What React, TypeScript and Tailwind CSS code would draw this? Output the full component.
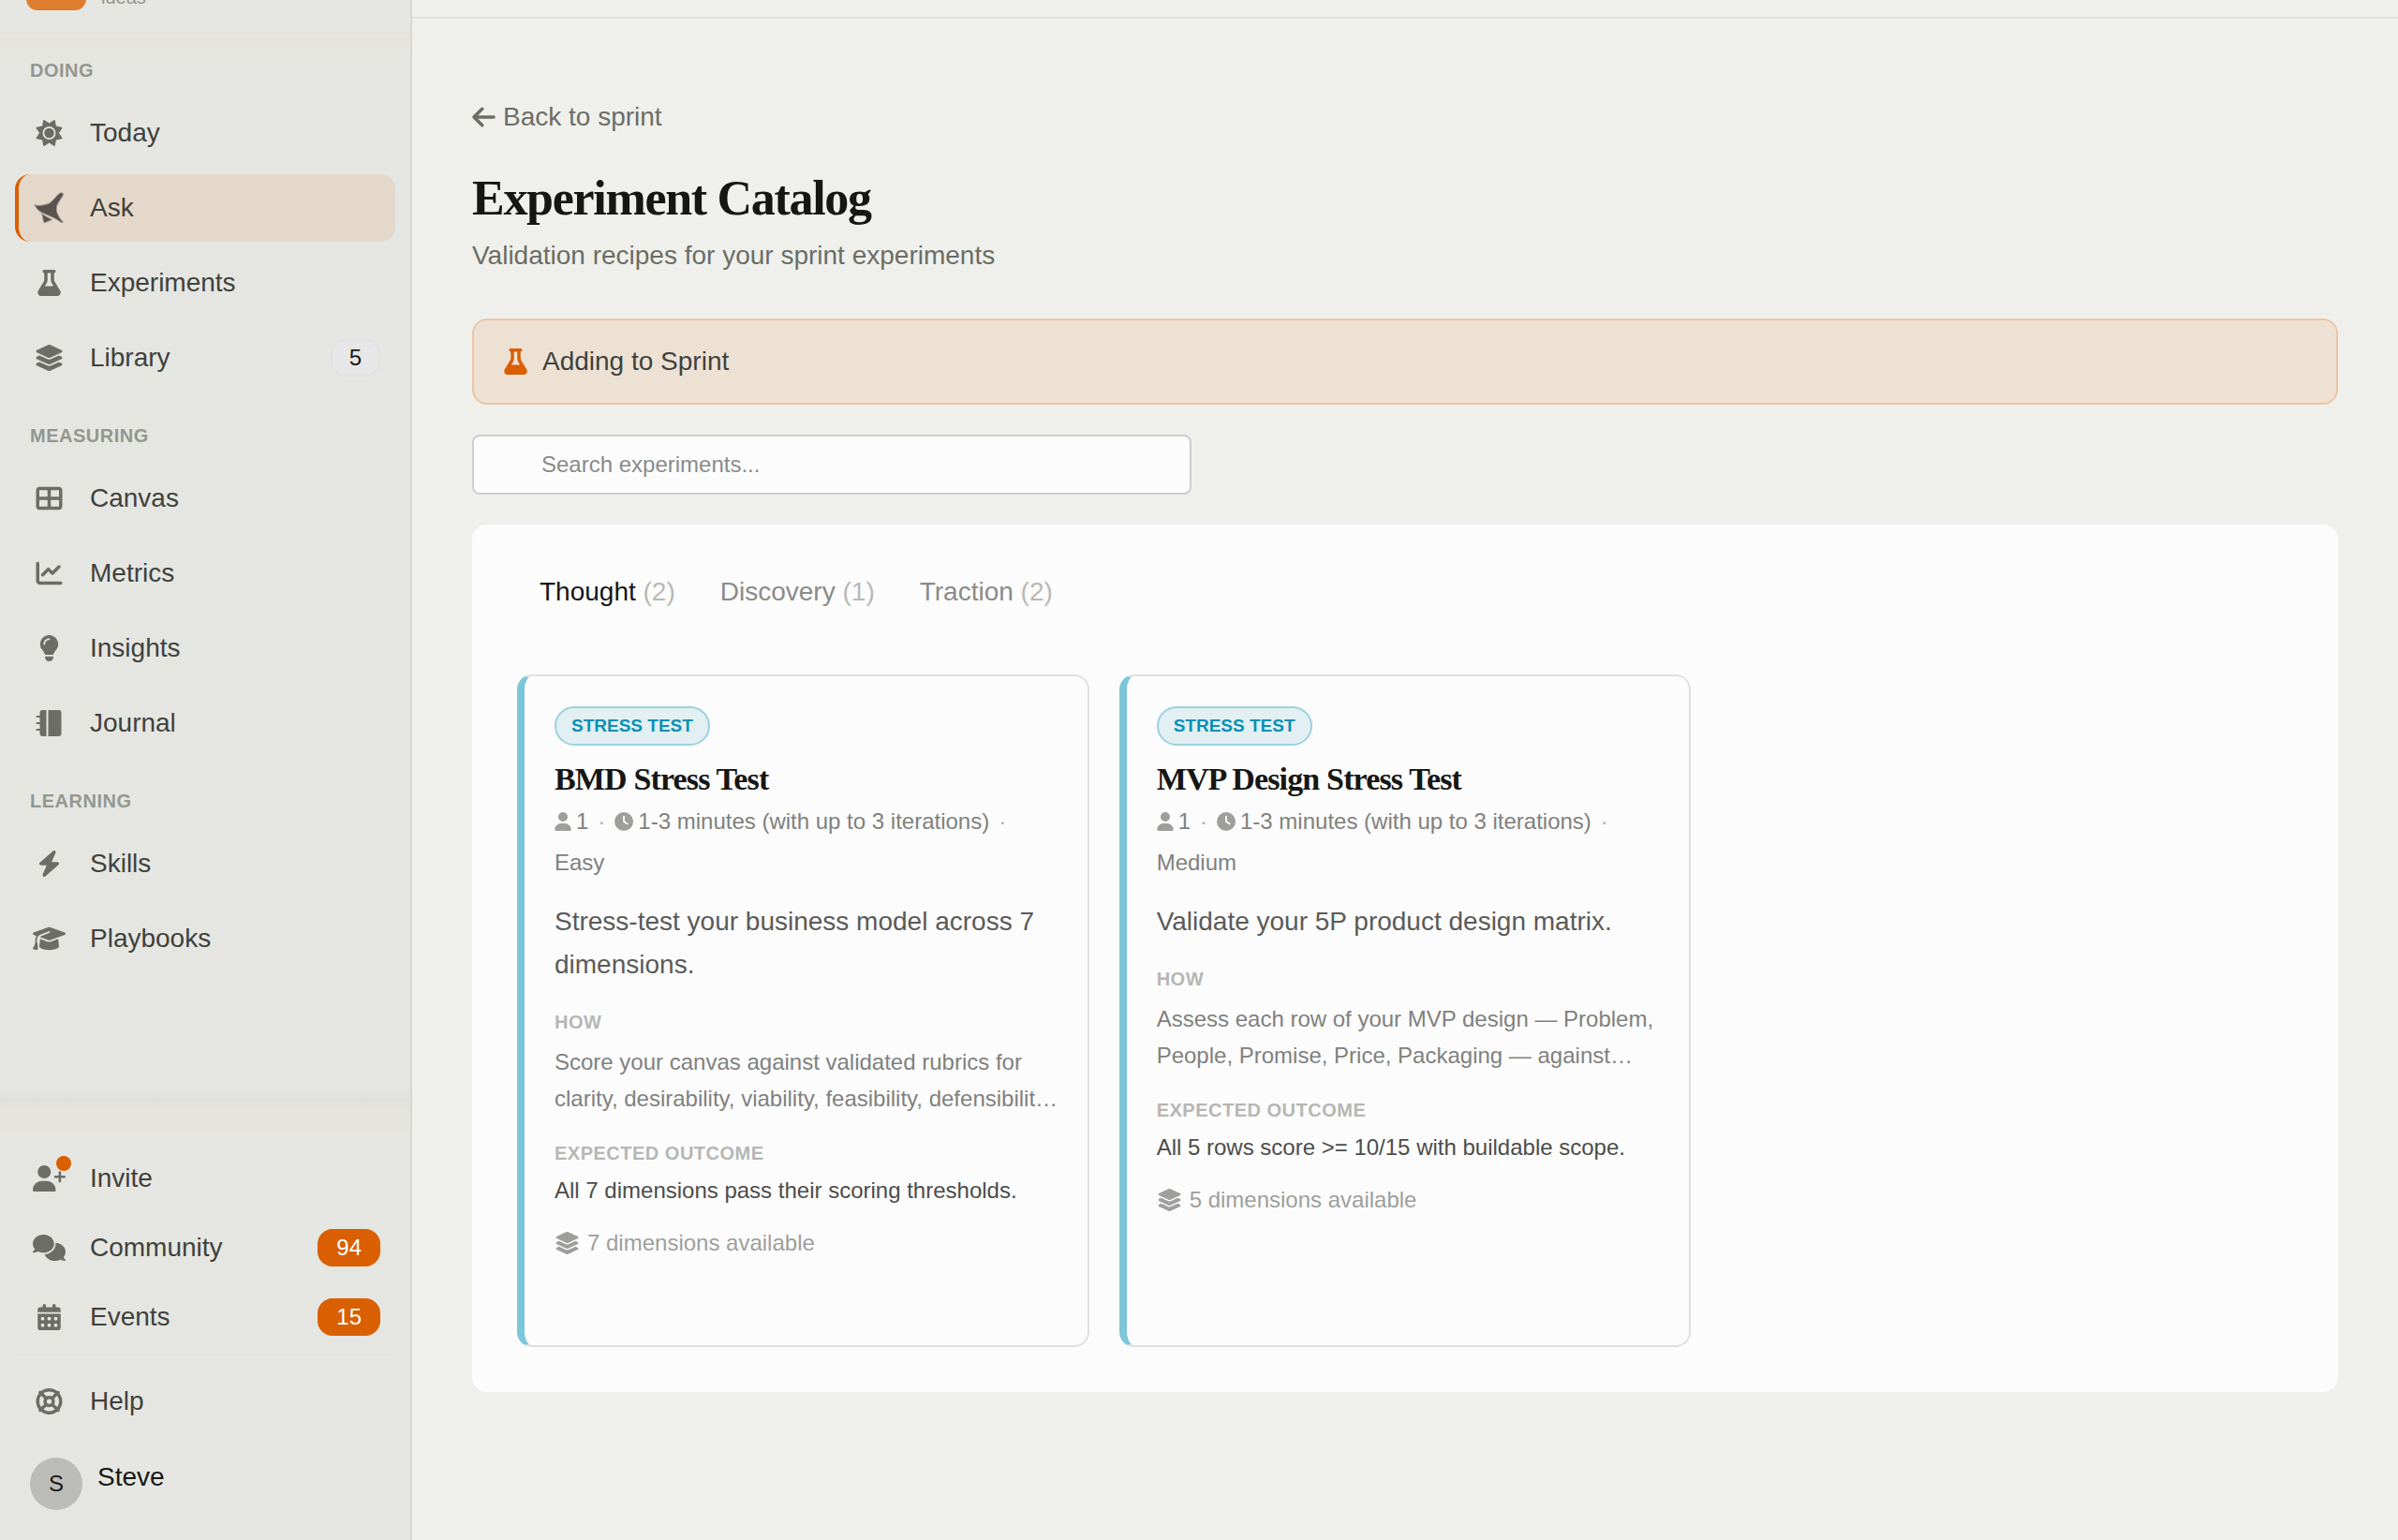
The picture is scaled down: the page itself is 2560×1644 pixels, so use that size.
import React from "react";
import {
  FaArrowLeft,
  FaBolt,
  FaCalendarDays,
  FaChartLine,
  FaClock,
  FaComments,
  FaFlask,
  FaGraduationCap,
  FaLayerGroup,
  FaLifeRing,
  FaLightbulb,
  FaSun,
  FaTableCellsLarge,
  FaUser,
  FaUserPlus,
} from "react-icons/fa6";

type Icon = React.ComponentType<{ className?: string }>;

function AskIcon({ className }: { className?: string }) {
  return (
    <svg viewBox="0 0 104 104" className={className} aria-hidden="true">
      <g fill="#58534f" stroke="#a8a098" strokeWidth="3" strokeLinejoin="round">
        <path d="M3 41C20 47 38 42 52 37C64 29 74 14 84 5Q91 0 97 4Q100 8 95 15C87 27 78 38 76 52C75 68 86 86 98 99Q94 102 86 96C72 84 40 74 22 64C13 57 8 49 3 41Z" />
        <path d="M27 70C38 78 50 84 62 90C52 94 44 98 36 101C30 92 33 80 27 70Z" />
      </g>
    </svg>
  );
}

function JournalIcon({ className }: { className?: string }) {
  return (
    <svg viewBox="0 0 28 28" className={className} fill="currentColor" aria-hidden="true">
      <path d="M7 0H11V28H7A3 3 0 0 1 4 25V22H1A1 1 0 0 1 1 20H4V15H1A1 1 0 0 1 1 13H4V8H1A1 1 0 0 1 1 6H4V3A3 3 0 0 1 7 0Z" />
      <path d="M13 0H24A3 3 0 0 1 27 3V25A3 3 0 0 1 24 28H13Z" />
    </svg>
  );
}

function NavItem({
  icon: IconView,
  label,
  active,
  count,
  badge,
  dot,
}: {
  icon: Icon;
  label: string;
  active?: boolean;
  count?: string;
  badge?: string;
  dot?: boolean;
}) {
  return (
    <a
      href="#"
      className={
        "flex h-[72px] items-center rounded-2xl border-l-4 pr-4 pl-[15px] text-[28px] text-[#40413c] " +
        (active ? "border-[#d95f00] bg-[#e4d8ca]" : "border-transparent")
      }
    >
      <span className="relative flex w-[35px] shrink-0 justify-center text-[#6b6d66]">
        <IconView className={active ? "h-[34px] w-[35px]" : "h-7 w-[35px]"} />
        {dot && <span className="absolute -top-[10px] -right-[6px] size-4 rounded-full bg-[#d95f00]" />}
      </span>
      <span className="ml-[26px] flex-1">{label}</span>
      {count && (
        <span className="flex h-10 items-center rounded-[16px] border-2 border-[#e0e1e0] bg-[#e6e7e6] px-[18px] text-[24px] text-[#161715]">
          {count}
        </span>
      )}
      {badge && (
        <span className="flex h-10 items-center rounded-[16px] bg-[#d95f00] px-5 text-[24px] text-white">{badge}</span>
      )}
    </a>
  );
}

function NavSection({ title, children }: { title: string; children: React.ReactNode }) {
  return (
    <section>
      <h2 className="px-4 pt-[27px] pb-[11px] text-[20px] leading-10 font-bold tracking-wide text-[#94968f]">
        {title}
      </h2>
      <div className="flex flex-col gap-2">{children}</div>
    </section>
  );
}

function Sidebar() {
  return (
    <aside className="flex w-[440px] shrink-0 flex-col border-r-2 border-[#d6d7d3] bg-[#e5e6e1]">
      <div className="flex h-9 shrink-0 flex-col justify-end overflow-hidden border-b-2 border-[#e3e3de]">
        <div className="flex items-end gap-4 px-7 pb-[23px]">
          <div className="size-16 shrink-0 rounded-xl bg-[#de7c30]" />
          <span className="text-[20px] leading-7 text-[#94968f]">ideas</span>
        </div>
      </div>
      <div className="h-[18px] shrink-0 bg-[#e5e4df]" />
      <nav className="-mt-[26px] flex flex-col px-4">
        <NavSection title="DOING">
          <NavItem icon={FaSun} label="Today" />
          <NavItem icon={AskIcon} label="Ask" active />
          <NavItem icon={FaFlask} label="Experiments" />
          <NavItem icon={FaLayerGroup} label="Library" count="5" />
        </NavSection>
        <NavSection title="MEASURING">
          <NavItem icon={FaTableCellsLarge} label="Canvas" />
          <NavItem icon={FaChartLine} label="Metrics" />
          <NavItem icon={FaLightbulb} label="Insights" />
          <NavItem icon={JournalIcon} label="Journal" />
        </NavSection>
        <NavSection title="LEARNING">
          <NavItem icon={FaBolt} label="Skills" />
          <NavItem icon={FaGraduationCap} label="Playbooks" />
        </NavSection>
      </nav>
      <div className="mt-auto">
        <div className="h-6 bg-linear-to-b from-[#e5e6e1] via-[#e0e1dc] to-[#e4e5e0]" />
        <div className="h-5 border-b-2 border-[#e3e4df] bg-[#e5e4df]" />
      </div>
      <div className="flex flex-col gap-[2px] px-4 pt-4 pb-2">
        <NavItem icon={FaUserPlus} label="Invite" dot />
        <NavItem icon={FaComments} label="Community" badge="94" />
        <NavItem icon={FaCalendarDays} label="Events" badge="15" />
      </div>
      <div className="mx-4 border-t-2 border-[#e2e3de] pt-2">
        <NavItem icon={FaLifeRing} label="Help" />
      </div>
      <button type="button" className="flex gap-4 px-8 pt-6 pb-8 text-left">
        <span className="flex size-14 items-center justify-center rounded-full bg-[#bbbcb7] text-[24px] text-[#161715]">
          S
        </span>
        <span className="text-[28px] leading-[42px] text-[#161715]">Steve</span>
      </button>
    </aside>
  );
}

interface Experiment {
  title: string;
  difficulty: string;
  summary: string;
  how: string;
  outcome: string;
  dimensions: string;
}

const experiments: Experiment[] = [
  {
    title: "BMD Stress Test",
    difficulty: "Easy",
    summary: "Stress-test your business model across 7 dimensions.",
    how: "Score your canvas against validated rubrics for clarity, desirability, viability, feasibility, defensibilit…",
    outcome: "All 7 dimensions pass their scoring thresholds.",
    dimensions: "7 dimensions available",
  },
  {
    title: "MVP Design Stress Test",
    difficulty: "Medium",
    summary: "Validate your 5P product design matrix.",
    how: "Assess each row of your MVP design — Problem, People, Promise, Price, Packaging — against…",
    outcome: "All 5 rows score >= 10/15 with buildable scope.",
    dimensions: "5 dimensions available",
  },
];

function Label({ children }: { children: React.ReactNode }) {
  return <h4 className="text-[20px] leading-8 font-bold tracking-wide text-[#b6b7b4]">{children}</h4>;
}

function ExperimentCard({ item }: { item: Experiment }) {
  return (
    <article className="rounded-2xl border-2 border-l-8 border-[#e0e0dd] border-l-[#7dc6d9] pt-8 pr-4 pb-[89px] pl-8">
      <div className="flex">
        <span className="flex h-[42px] items-center rounded-full border-2 border-[#9ad2e0] bg-[#e2eff3] px-4 text-[19px] font-bold text-[#0891b5]">
          STRESS TEST
        </span>
      </div>
      <h3 className="mt-[14px] font-['Liberation_Serif',serif] text-[34px] leading-[44px] font-bold tracking-tight text-[#161715]">
        {item.title}
      </h3>
      <div className="mt-px flex flex-wrap items-center text-[24px] leading-[44px] text-[#80817e]">
        <FaUser className="mr-[5px] h-5 w-[18px] text-[#9e9e9c]" />
        <span>1</span>
        <span className="mx-[10px] text-[#b0b1ae]">·</span>
        <FaClock className="mr-[5px] size-5 text-[#9e9e9c]" />
        <span>1-3 minutes (with up to 3 iterations)</span>
        <span className="mx-[10px] text-[#b0b1ae]">·</span>
        <span className="basis-full">{item.difficulty}</span>
      </div>
      <p className="mt-[18px] text-[28px] leading-[46px] text-[#5a5b58]">{item.summary}</p>
      <div className="mt-[22px]">
        <Label>HOW</Label>
        <p className="mt-[7px] text-[24px] leading-[39px] text-[#80817e]">{item.how}</p>
      </div>
      <div className="mt-[23px]">
        <Label>EXPECTED OUTCOME</Label>
        <p className="mt-1 text-[24px] leading-10 text-[#4c4d4a]">{item.outcome}</p>
      </div>
      <p className="mt-4 flex items-center gap-2 text-[24px] leading-10 text-[#9e9f9c]">
        <FaLayerGroup className="h-6 w-[27px]" />
        {item.dimensions}
      </p>
    </article>
  );
}

const tabs = [
  { name: "Thought", count: 2 },
  { name: "Discovery", count: 1 },
  { name: "Traction", count: 2 },
];

export default function App() {
  return (
    <div className="flex min-h-screen bg-[#eff0eb] font-['Liberation_Sans',sans-serif]">
      <Sidebar />
      <div className="flex min-w-0 flex-1 flex-col">
        <header className="h-5 border-b-2 border-[#e0e1dd]" />
        <main className="px-16 pt-20">
          <a href="#" className="flex w-fit items-center gap-2 text-[28px] leading-[50px] text-[#6b6d66]">
            <FaArrowLeft className="h-7 w-[25px]" />
            Back to sprint
          </a>
          <h1 className="mt-[30px] font-['Liberation_Serif',serif] text-[52px] leading-[64px] font-bold tracking-tight text-[#161715]">
            Experiment Catalog
          </h1>
          <p className="mt-[6px] text-[28px] leading-[46px] text-[#6b6d66]">
            Validation recipes for your sprint experiments
          </p>
          <div className="mt-11 flex h-[92px] items-center gap-4 rounded-2xl border-2 border-[#ebc5a4] bg-[#ede1d4] px-8 text-[28px] text-[#40413c]">
            <FaFlask className="h-7 w-[25px] text-[#d95f00]" />
            Adding to Sprint
          </div>
          <input
            type="search"
            aria-label="Search experiments"
            placeholder="Search experiments..."
            className="mt-8 block h-16 w-full max-w-[768px] rounded-lg border-2 border-[#cdcecd] bg-[#fcfcfc] pl-[72px] text-[24px] placeholder:text-[#8a8b89]"
          />
          <section className="mt-8 rounded-2xl bg-[#fcfcfc] p-12">
            <div role="tablist" className="flex">
              {tabs.map((tab, index) => (
                <button
                  key={tab.name}
                  type="button"
                  role="tab"
                  aria-selected={index === 0}
                  className={"h-12 px-6 text-[28px] " + (index === 0 ? "text-[#161715]" : "text-[#8a8b88]")}
                >
                  {tab.name} <span className="text-[#b8b9b6]">({tab.count})</span>
                </button>
              ))}
            </div>
            <div className="mt-16 grid grid-cols-3 gap-8">
              {experiments.map((item) => (
                <ExperimentCard key={item.title} item={item} />
              ))}
            </div>
          </section>
        </main>
      </div>
    </div>
  );
}
